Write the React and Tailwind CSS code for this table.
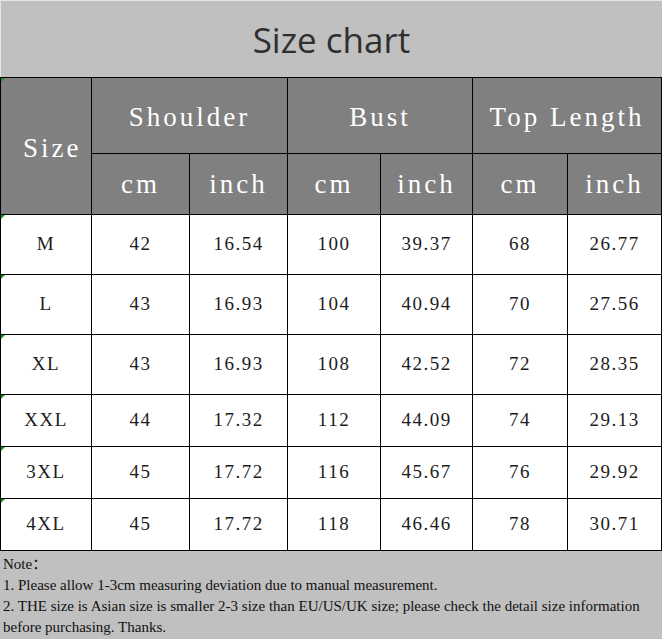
const rows = [
  ["M", "42", "16.54", "100", "39.37", "68", "26.77"],
  ["L", "43", "16.93", "104", "40.94", "70", "27.56"],
  ["XL", "43", "16.93", "108", "42.52", "72", "28.35"],
  ["XXL", "44", "17.32", "112", "44.09", "74", "29.13"],
  ["3XL", "45", "17.72", "116", "45.67", "76", "29.92"],
  ["4XL", "45", "17.72", "118", "46.46", "78", "30.71"],
];

const serif = { fontFamily: '"Liberation Serif", "Noto Sans CJK SC", serif' };

// little green corner flag, like the spreadsheet error marker
function Flag() {
  return (
    <span className="absolute left-0 top-0 w-0 h-0 border-t-[4px] border-r-[4px] border-t-[#1f8f2a] border-r-transparent" />
  );
}

function Head({ children, className = "" }) {
  return (
    <div
      className={`bg-[#808080] text-white flex items-center justify-center text-[27px] tracking-[3px] ${className}`}
      style={serif}
    >
      {children}
    </div>
  );
}

export default function App() {
  return (
    <div className="w-[662px] h-[639px] bg-[#c0c0c0] flex flex-col overflow-hidden">
      {/* Title */}
      <div
        className="h-[77px] shrink-0 flex items-center justify-center pt-[2px] border-t border-l border-[#e6e6e6] text-[35px] text-[#2f2f2f]"
        style={{ fontFamily: '"Open Sans", sans-serif' }}
      >
        Size chart
      </div>

      {/* Table */}
      <div className="shrink-0 grid grid-cols-[90px_97px_97px_92px_91px_94px_93px] grid-rows-[75px_60px_59px_59px_59px_51px_51px_51px] gap-px p-px bg-black">
        <Head className="row-span-2 relative justify-start pl-[22px] pt-[4px]">
          <Flag />
          Size
        </Head>
        <Head className="col-span-2 pt-[4px]">Shoulder</Head>
        <Head className="col-span-2 pt-[4px]">Bust</Head>
        <Head className="col-span-2 pt-[4px]">Top Length</Head>
        <Head className="text-[25px]">cm</Head>
        <Head className="text-[25px]">inch</Head>
        <Head className="text-[25px]">cm</Head>
        <Head className="text-[25px]">inch</Head>
        <Head className="text-[25px]">cm</Head>
        <Head className="text-[25px]">inch</Head>

        {rows.map((row) =>
          row.map((cell, i) => (
            <div
              key={row[0] + i}
              className="relative bg-white flex items-center justify-center text-[19px] tracking-[1.5px] text-[#1c1c1c]"
              style={serif}
            >
              {i === 0 && <Flag />}
              {cell}
            </div>
          ))
        )}
      </div>

      {/* Notes */}
      <div
        className="flex-1 min-h-0 overflow-hidden px-[3px] pt-[3px] text-[15px] leading-[21px] text-[#111]"
        style={serif}
      >
        <p>Note：</p>
        <p>1. Please allow 1-3cm measuring deviation due to manual measurement.</p>
        <p>
          2. THE size is Asian size is smaller 2-3 size than EU/US/UK size; please check the detail size information
          before purchasing. Thanks.
        </p>
      </div>
    </div>
  );
}
